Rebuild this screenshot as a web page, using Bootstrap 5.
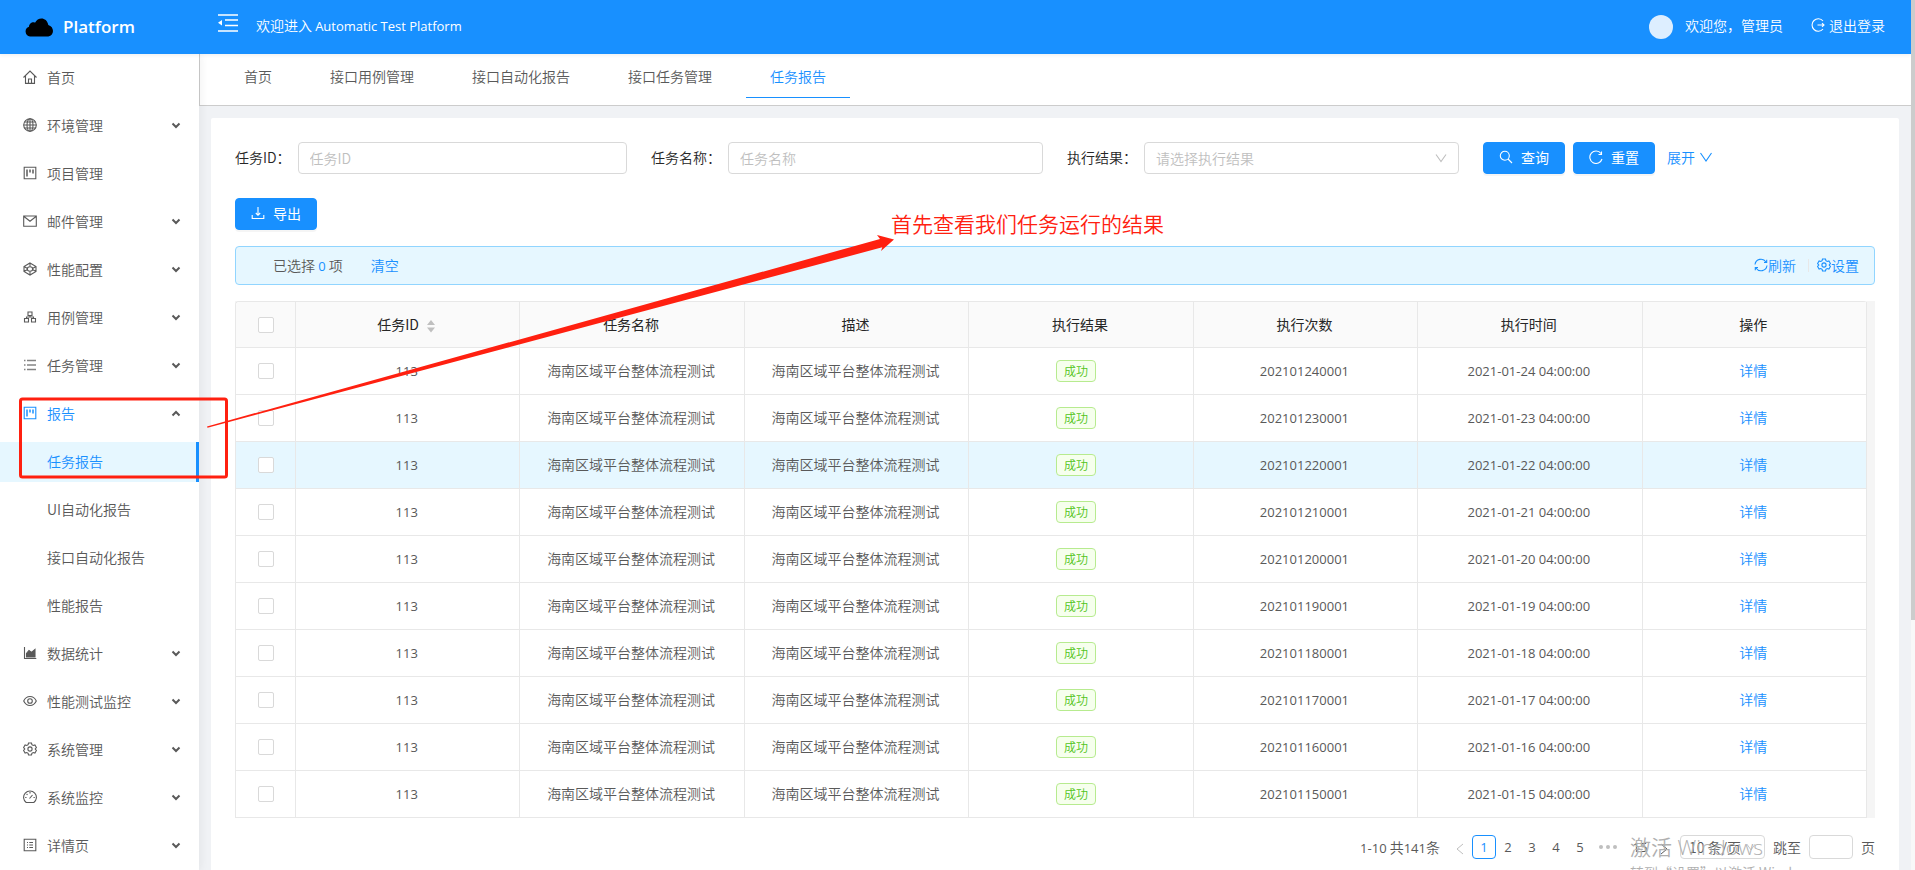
<!DOCTYPE html>
<html lang="zh-CN">
<head>
<meta charset="utf-8">
<meta name="viewport" content="width=device-width, initial-scale=1">
<title>Automatic Test Platform</title>
<link href="https://cdn.jsdelivr.net/npm/bootstrap@5.3.0/dist/css/bootstrap.min.css" rel="stylesheet">
<style>
:root{--blue:#1890ff;--ink:#595959;--line:#e8e8e8}
body{font-family:"Noto Sans CJK SC",sans-serif;font-weight:350;font-size:14px;line-height:22px;color:var(--ink);background:#f0f2f5}
a{color:var(--blue);text-decoration:none}
.latin{font-family:"Open Sans","Noto Sans CJK SC",sans-serif;font-size:13px;font-weight:400}
.ico{width:14px;height:14px;flex:none;fill:none;stroke:currentColor;stroke-width:1.1}
.app{height:100vh}
.topbar{height:54px;background:var(--blue);color:#fff;box-shadow:0 1px 4px rgba(0,21,41,.08);z-index:3}
.topbar a{color:#fff}
.brand{width:200px;padding-left:25px;gap:10px;font:600 17px/22px "Open Sans",sans-serif}
.user{padding-right:26px}
.avatar{width:24px;height:24px;background:#ddeeff}
.side{width:199px;padding-top:4px;box-shadow:2px 0 8px rgba(29,35,41,.06);z-index:2}
.side a{height:40px;margin-bottom:8px;padding:0 17px 2px 23px;gap:10px;color:var(--ink)}
.side a.child{padding-left:47px}
.side a.open{color:var(--blue)}
.side a.current{color:var(--blue);background:#e6f7ff;border-right:3px solid var(--blue)}
.side .caret{width:12px;height:12px;margin-left:auto;color:var(--ink);stroke-width:2}
.tabs{height:52px;border-left:1px solid #ccc;border-bottom:1px solid #ccc;padding-left:20px;gap:10px}
.tabs a{height:44px;padding:0 24px;line-height:44px;color:var(--ink)}
.tabs a.active{color:var(--blue);border-bottom:1px solid var(--blue)}
.panel{margin:12px 12px 0;padding:24px 24px 40px;border-radius:2px}
.filters{--bs-gutter-x:24px}
.field{gap:7px}
.filters label{color:#262626;flex:none;padding-bottom:2px}
.form-control,.form-select{height:32px;font-size:14px;font-weight:350;line-height:22px;padding:4px 11px;border-color:#d9d9d9;border-radius:4px;min-width:0}
.form-control::placeholder{color:#bfbfbf}
.filters .form-select{padding-top:3px}
.form-select{color:#bfbfbf;background-position:right 11px center;background-size:12px 12px;background-image:url("data:image/svg+xml,%3Csvg xmlns='http://www.w3.org/2000/svg' viewBox='0 0 12 12'%3E%3Cpath d='M1 2.500l5 7 5-7' fill='none' stroke='%23bfbfbf' stroke-width='1.100'/%3E%3C/svg%3E")}
.act{height:32px;padding:0 15px 2px;gap:8px;font-size:14px;font-weight:400;line-height:22px;border-radius:4px;--bs-btn-bg:#1890ff;--bs-btn-border-color:#1890ff;box-shadow:0 2px 0 rgba(0,0,0,.04)}
.more{padding-bottom:2px;margin-left:4px}
.selbar{height:39px;margin:16px 0;padding:0 15px 1px 37px;background:#e6f7ff;border:1px solid #91d5ff;border-radius:4px}
.rule{width:1px;height:13px;background:var(--line);margin:0 8px 0 12px}
.gridwrap{padding-right:8px;background:#f5f5f5}
.grid{width:100%;table-layout:fixed;border-collapse:separate;border-spacing:0;border:solid var(--line);border-width:1px 0 0 1px;border-radius:4px 4px 0 0;background:#fff}
.grid th,.grid td{height:47px;padding:0 10px 2px 8px;text-align:center;border:solid var(--line);border-width:0 1px 1px 0}
.grid th{height:46px;background:#fafafa;font-weight:400;color:#262626}
.grid th:first-child{width:60px;border-top-left-radius:4px}
.grid th:first-child,.grid td:first-child{padding:0 8px}
.grid td.latin{padding-bottom:0}
.grid tr.hover td{background:#e6f7ff}
.grid .form-check-input{display:block;float:none;width:16px;height:16px;margin:0 auto;border:1px solid #d9d9d9;border-radius:2px;background-color:#fff}
.tag{display:inline-block;margin-right:8px;padding:0 7px;font-size:12px;line-height:20px;color:#52c41a;background:#f6ffed;border:1px solid #b7eb8f;border-radius:4px}
.pager{margin-top:17px}
.pager .pg{width:24px;height:24px;line-height:22px;text-align:center;border:1px solid transparent;border-radius:4px;color:var(--ink)}
.pager .pg.active{border-color:var(--blue);color:var(--blue)}
.pager .form-select{width:85px;height:24px;padding:0 8px;line-height:20px;color:var(--ink);margin:0 8px 0 4px;background-position:right 8px center;background-size:10px 10px}
.pager .form-control{width:44px;height:24px;margin:0 8px}
.scrolltrack{width:4px;background:#f8f8f8}
.scrollthumb{height:71.300%;background:#ccc}
.marks{left:0;top:0;width:920px;height:500px;z-index:5;pointer-events:none}
.hint{left:891px;top:208px;z-index:5;font-size:21px;line-height:30px;color:#ff2010}
.activate{left:1630px;top:832px;z-index:5;color:#b0b0b0;font-size:14px;line-height:20px;pointer-events:none}
.activate strong{display:block;font:350 21px/30px "Open Sans","Noto Sans CJK SC",sans-serif}
</style>
<script src="https://cdn.jsdelivr.net/npm/bootstrap@5.3.0/dist/js/bootstrap.bundle.min.js"></script>
</head>
<body>
<svg class="d-none">
<symbol id="home" viewBox="0 0 14 14"><path d="M.5 7.500 7 1l6.500 6.500M2.500 6v7.400h9V6M5.500 13V9h3v4"/></symbol>
<symbol id="globe" viewBox="0 0 14 14"><circle cx="7" cy="7" r="6.300"/><ellipse cx="7" cy="7" rx="3" ry="6.300"/><path d="M.7 7h12.600M7 .7v12.600M1.600 4h10.800M1.600 10h10.800"/></symbol>
<symbol id="project" viewBox="0 0 14 14"><path d="M1.200 1.200h11.600v11.600H1.200z"/><path d="M4 3.500v7M7 3.500v3M10 3.500v4" stroke-width="1.500"/></symbol>
<symbol id="mail" viewBox="0 0 14 14"><path d="M.7 2h12.600v10.300H.7zM1 2.500l6 4.700 6-4.700"/></symbol>
<symbol id="sand" viewBox="0 0 14 14"><path d="M7 1l6 3.500v5L7 13 1 9.500v-5zM1 4.500l3.500 2M13 4.500l-3.500 2M1 9.500l3.500-2M13 9.500l-3.500-2M7 1v3.500M7 13V9.500"/><ellipse cx="7" cy="7" rx="2.700" ry="2.200"/></symbol>
<symbol id="cluster" viewBox="0 0 14 14"><path d="M5 2h4v3.500H5zM1.500 8.500h4V12h-4zM8.500 8.500h4V12h-4zM7 5.500V7M3.500 8.500V7h7v1.500"/></symbol>
<symbol id="list" viewBox="0 0 14 14"><path d="M4 2.500h9M4 7h9M4 11.500h9M1 2.500h1.500M1 7h1.500M1 11.500h1.500" stroke-width="1.300" opacity=".75"/></symbol>
<symbol id="area" viewBox="0 0 14 14"><path d="M1.500 1v11.500h11.800"/><path d="M3.500 11V7.500l2.500-3 2.500 2L12 3.500V11z" fill="currentColor"/></symbol>
<symbol id="eye" viewBox="0 0 14 14"><path d="M.7 7C3.500 1 10.500 1 13.300 7 10.500 13 3.500 13 .7 7z"/><circle cx="7" cy="7" r="2.300"/></symbol>
<symbol id="gear" viewBox="0 0 14 14"><path d="M5.500 1h3l.4 1.700 1.300.8 1.700-.5 1.500 2.500L12.200 7l1.200 1.500-1.500 2.500-1.700-.5-1.300.8L8.500 13h-3l-.4-1.700-1.300-.8-1.700.5L.6 8.500 1.800 7 .6 5.500 2.100 3l1.700.5 1.300-.8z"/><circle cx="7" cy="7" r="2.100"/></symbol>
<symbol id="dash" viewBox="0 0 14 14"><path d="M3.200 12.500a6.400 6.400 0 1 1 7.600 0zM6.500 8.500 9.500 5M7 2v1.500M2.200 7.500h1.300M10.500 7.500h1.300M3.600 4l.9.9"/></symbol>
<symbol id="profile" viewBox="0 0 14 14"><path d="M1.200 1.200h11.600v11.600H1.200zM4 4.500h1M4 7h1M4 9.500h1M6.300 4.500H10M6.300 7H10M6.300 9.500H10"/></symbol>
<symbol id="down" viewBox="0 0 12 12"><path d="M2.500 4.500 6 8 9.500 4.500"/></symbol>
<symbol id="up" viewBox="0 0 12 12"><path d="M2.500 8.500 6 5 9.500 8.500"/></symbol>
<symbol id="sync" viewBox="0 0 14 14"><path d="M1 6.500A6 6 0 0 1 12 4M13 7.500A6 6 0 0 1 2 10M12.700 1.800V4.500H10M1.300 12.200V9.500H4"/></symbol>
</svg>

<div class="app d-flex overflow-hidden position-relative">
<div class="flex-grow-1 d-flex flex-column overflow-hidden">
  <header class="topbar d-flex align-items-center flex-shrink-0">
    <div class="brand d-flex align-items-center">
      <svg width="28" height="19" viewBox="0 0 28 19"><path d="M5 18.500a5 5 0 0 1-1-9.700C4 5.500 7.500 3.500 10 4.700 13-1.500 22-1 23.300 7c6 1.500 6.500 10.500 0 11.500z"/></svg>
      <span>Platform</span>
    </div>
    <button class="btn p-0 border-0 text-white ms-3 me-3 mb-2" aria-label="menu"><svg class="d-block" width="24" height="20" viewBox="0 0 24 20" fill="none" stroke="currentColor" stroke-width="1.600"><path d="M2 2h20M9 7h13M9 12.500h13M2 18h20"/><path d="M2 9.700 6 7v5.500z" fill="currentColor" stroke="none"/></svg></button>
    <span class="mb-1">欢迎进入 <span class="latin">Automatic Test Platform</span></span>
    <div class="user ms-auto d-flex align-items-center">
      <span class="avatar rounded-circle me-2"></span><span class="ms-1 me-4 mb-1">欢迎您，管理员</span>
      <a href="#" class="d-flex align-items-center gap-1 ms-1 mb-1"><svg class="ico" viewBox="0 0 14 14"><path d="M12 3a6.200 6.200 0 1 0 0 8M6.500 7h6.500M11 5.200 13 7l-2 1.800"/></svg>退出登录</a>
    </div>
  </header>
  <div class="d-flex flex-grow-1 overflow-hidden">
    <nav class="side bg-white flex-shrink-0 d-flex flex-column">
      <a href="#" class="d-flex align-items-center flex-shrink-0"><svg class="ico"><use href="#home"/></svg>首页</a>
      <a href="#" class="d-flex align-items-center flex-shrink-0"><svg class="ico"><use href="#globe"/></svg>环境管理<svg class="ico caret"><use href="#down"/></svg></a>
      <a href="#" class="d-flex align-items-center flex-shrink-0"><svg class="ico"><use href="#project"/></svg>项目管理</a>
      <a href="#" class="d-flex align-items-center flex-shrink-0"><svg class="ico"><use href="#mail"/></svg>邮件管理<svg class="ico caret"><use href="#down"/></svg></a>
      <a href="#" class="d-flex align-items-center flex-shrink-0"><svg class="ico"><use href="#sand"/></svg>性能配置<svg class="ico caret"><use href="#down"/></svg></a>
      <a href="#" class="d-flex align-items-center flex-shrink-0"><svg class="ico"><use href="#cluster"/></svg>用例管理<svg class="ico caret"><use href="#down"/></svg></a>
      <a href="#" class="d-flex align-items-center flex-shrink-0"><svg class="ico"><use href="#list"/></svg>任务管理<svg class="ico caret"><use href="#down"/></svg></a>
      <a href="#" class="open d-flex align-items-center flex-shrink-0"><svg class="ico"><use href="#project"/></svg>报告<svg class="ico caret"><use href="#up"/></svg></a>
      <a href="#" class="child current d-flex align-items-center flex-shrink-0">任务报告</a>
      <a href="#" class="child d-flex align-items-center flex-shrink-0">UI自动化报告</a>
      <a href="#" class="child d-flex align-items-center flex-shrink-0">接口自动化报告</a>
      <a href="#" class="child d-flex align-items-center flex-shrink-0">性能报告</a>
      <a href="#" class="d-flex align-items-center flex-shrink-0"><svg class="ico"><use href="#area"/></svg>数据统计<svg class="ico caret"><use href="#down"/></svg></a>
      <a href="#" class="d-flex align-items-center flex-shrink-0"><svg class="ico"><use href="#eye"/></svg>性能测试监控<svg class="ico caret"><use href="#down"/></svg></a>
      <a href="#" class="d-flex align-items-center flex-shrink-0"><svg class="ico"><use href="#gear"/></svg>系统管理<svg class="ico caret"><use href="#down"/></svg></a>
      <a href="#" class="d-flex align-items-center flex-shrink-0"><svg class="ico"><use href="#dash"/></svg>系统监控<svg class="ico caret"><use href="#down"/></svg></a>
      <a href="#" class="d-flex align-items-center flex-shrink-0"><svg class="ico"><use href="#profile"/></svg>详情页<svg class="ico caret"><use href="#down"/></svg></a>
    </nav>
    <main class="flex-grow-1 overflow-hidden">
      <nav class="tabs bg-white d-flex">
        <a href="#">首页</a><a href="#">接口用例管理</a><a href="#">接口自动化报告</a><a href="#">接口任务管理</a><a href="#" class="active">任务报告</a>
      </nav>
      <section class="panel bg-white">
        <form class="filters row">
          <div class="field col-3 d-flex align-items-center"><label for="tid">任务ID：</label><input id="tid" class="form-control" placeholder="任务ID"></div>
          <div class="field col-3 d-flex align-items-center"><label for="tname">任务名称：</label><input id="tname" class="form-control" placeholder="任务名称"></div>
          <div class="field col-3 d-flex align-items-center"><label for="tres">执行结果：</label><select id="tres" class="form-select"><option>请选择执行结果</option></select></div>
          <div class="col-3 d-flex align-items-center gap-2">
            <button type="button" class="btn btn-primary act d-flex align-items-center"><svg class="ico" viewBox="0 0 14 14"><circle cx="5.800" cy="5.800" r="4.500"/><path d="M9 9l4 4"/></svg>查询</button>
            <button type="button" class="btn btn-primary act d-flex align-items-center"><svg class="ico" viewBox="0 0 14 14"><path d="M12 3.500A6.200 6.200 0 1 0 13 9M12.500 1.500V4.500H9.500"/></svg>重置</button>
            <a href="#" class="more d-flex align-items-center gap-1">展开<svg class="ico" viewBox="0 0 14 14"><path d="M1.500 3 7 11l5.500-8"/></svg></a>
          </div>
        </form>
        <button type="button" class="btn btn-primary act d-flex align-items-center mt-4"><svg class="ico" viewBox="0 0 14 14"><path d="M7 1v8M4.800 7 7 9.300 9.200 7M1.200 9v3.500h11.600V9"/></svg>导出</button>
        <div class="selbar d-flex align-items-center">
          <span>已选择 <a href="#" class="latin">0</a> 项</span><a href="#" class="ms-4 ps-1">清空</a>
          <a href="#" class="ms-auto d-flex align-items-center"><svg class="ico"><use href="#sync"/></svg>刷新</a><span class="rule"></span><a href="#" class="d-flex align-items-center"><svg class="ico"><use href="#gear"/></svg>设置</a>
        </div>
        <div class="gridwrap">
          <table class="grid">
            <thead><tr><th><input type="checkbox" class="form-check-input" aria-label="全选"></th><th>任务ID <svg class="ms-1" width="10" height="14" viewBox="0 0 10 14" fill="#bfbfbf"><path d="M1 6l4-5 4 5zM1 8.500h8l-4 5z"/></svg></th><th>任务名称</th><th>描述</th><th>执行结果</th><th>执行次数</th><th>执行时间</th><th>操作</th></tr></thead>
            <tbody id="rows"></tbody>
          </table>
        </div>
        <nav class="pager d-flex justify-content-end align-items-center">
          <span class="me-2"><span class="latin">1-10</span> 共<span class="latin">141</span>条</span>
          <a href="#" class="pg" aria-label="上一页"><svg width="8" height="12" viewBox="0 0 8 12" fill="none" stroke="#bfbfbf"><path d="M7 1 1 6l6 5"/></svg></a>
          <a href="#" class="pg latin active">1</a><a href="#" class="pg latin">2</a><a href="#" class="pg latin">3</a><a href="#" class="pg latin">4</a><a href="#" class="pg latin">5</a>
          <svg class="mx-1" width="24" height="24" fill="#bfbfbf"><circle cx="5" cy="12" r="2"/><circle cx="12" cy="12" r="2"/><circle cx="19" cy="12" r="2"/></svg>
          <a href="#" class="pg latin ms-1">15</a>
          <a href="#" class="pg" aria-label="下一页"><svg width="8" height="12" viewBox="0 0 8 12" fill="none" stroke="#595959"><path d="M1 1l6 5-6 5"/></svg></a>
          <select class="form-select" aria-label="每页条数"><option>10 条/页</option></select>
          <label for="jump">跳至</label><input id="jump" class="form-control"><span>页</span>
        </nav>
      </section>
    </main>
  </div>
</div>
<div class="scrolltrack flex-shrink-0"><div class="scrollthumb"></div></div>

<svg class="marks position-absolute"><rect x="20.500" y="399" width="206" height="78" rx="2" fill="none" stroke="#ff2010" stroke-width="3"/><path d="M207 426.500 880 239 877 235 894 239.500 881 251 882.300 247.300 207.500 427.800z" fill="#ff2010"/></svg>
<div class="hint position-absolute text-nowrap">首先查看我们任务运行的结果</div>
<div class="activate position-absolute text-nowrap"><strong>激活 Windows</strong>转到“设置”以激活 Wind</div>
</div>
<script>
document.getElementById('rows').innerHTML = [24,23,22,21,20,19,18,17,16,15].map(d => `
<tr${d === 22 ? ' class="hover"' : ''}><td><input type="checkbox" class="form-check-input" aria-label="选择"></td><td class="latin">113</td><td>海南区域平台整体流程测试</td><td>海南区域平台整体流程测试</td><td><span class="tag">成功</span></td><td class="latin">202101${d}0001</td><td class="latin">2021-01-${d} 04:00:00</td><td><a href="#">详情</a></td></tr>`).join('');
</script>
</body>
</html>
